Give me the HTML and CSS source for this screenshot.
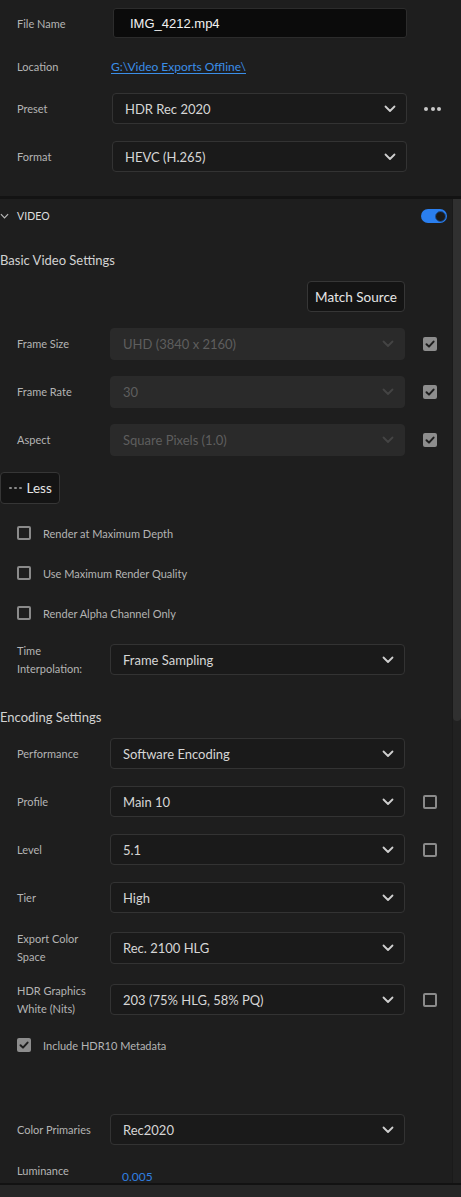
FILE: index.html
```html
<!DOCTYPE html>
<html>
<head>
<meta charset="utf-8">
<link rel="stylesheet" href="styles.css">
</head>
<body>
<div class="top">
  <div class="trow trow-name">
    <span class="tlabel">File Name</span>
    <div class="name-input">IMG_4212.mp4</div>
  </div>
  <div class="trow trow-loc">
    <span class="tlabel">Location</span>
    <a class="link" href="#">G:\Video Exports Offline\</a>
  </div>
  <div class="trow trow-preset">
    <span class="tlabel">Preset</span>
    <div class="select tselect"><span>HDR Rec 2020</span><svg class="chev" viewBox="0 0 12 8"><path d="M1.5 1.5 L6 6 L10.5 1.5"/></svg></div>
    <div class="more"><i></i><i></i><i></i></div>
  </div>
  <div class="trow trow-format">
    <span class="tlabel">Format</span>
    <div class="select tselect"><span>HEVC (H.265)</span><svg class="chev" viewBox="0 0 12 8"><path d="M1.5 1.5 L6 6 L10.5 1.5"/></svg></div>
  </div>
</div>
<div class="sep"></div>
<div class="scroll">
  <div class="content">
    <div class="video-head">
      <svg class="head-chev" viewBox="0 0 10 6"><path d="M1 1 L5 5 L9 1"/></svg>
      <span class="video-title">VIDEO</span>
      <div class="toggle"><span class="knob"></span></div>
    </div>
    <div class="heading h-basic">Basic Video Settings</div>
    <div class="match-row"><button class="btn match">Match Source</button></div>

    <div class="row r-first">
      <span class="label">Frame Size</span>
      <div class="select disabled"><span>UHD (3840 x 2160)</span><svg class="chev" viewBox="0 0 12 8"><path d="M1.5 1.5 L6 6 L10.5 1.5"/></svg></div>
      <span class="cb checked"><svg viewBox="0 0 14 14"><path d="M3.5 7.2 L6 9.6 L10.6 4.6"/></svg></span>
    </div>
    <div class="row r-dis">
      <span class="label">Frame Rate</span>
      <div class="select disabled"><span>30</span><svg class="chev" viewBox="0 0 12 8"><path d="M1.5 1.5 L6 6 L10.5 1.5"/></svg></div>
      <span class="cb checked"><svg viewBox="0 0 14 14"><path d="M3.5 7.2 L6 9.6 L10.6 4.6"/></svg></span>
    </div>
    <div class="row r-dis">
      <span class="label">Aspect</span>
      <div class="select disabled"><span>Square Pixels (1.0)</span><svg class="chev" viewBox="0 0 12 8"><path d="M1.5 1.5 L6 6 L10.5 1.5"/></svg></div>
      <span class="cb checked"><svg viewBox="0 0 14 14"><path d="M3.5 7.2 L6 9.6 L10.6 4.6"/></svg></span>
    </div>

    <button class="btn less"><span class="sdots"><i></i><i></i><i></i></span>Less</button>

    <div class="crow c-first"><span class="cb"></span><span class="ctext">Render at Maximum Depth</span></div>
    <div class="crow"><span class="cb"></span><span class="ctext">Use Maximum Render Quality</span></div>
    <div class="crow"><span class="cb"></span><span class="ctext">Render Alpha Channel Only</span></div>

    <div class="row r-time">
      <span class="label two">Time<br>Interpolation:</span>
      <div class="select"><span>Frame Sampling</span><svg class="chev" viewBox="0 0 12 8"><path d="M1.5 1.5 L6 6 L10.5 1.5"/></svg></div>
    </div>

    <div class="heading h-enc">Encoding Settings</div>

    <div class="row r-perf">
      <span class="label">Performance</span>
      <div class="select"><span>Software Encoding</span><svg class="chev" viewBox="0 0 12 8"><path d="M1.5 1.5 L6 6 L10.5 1.5"/></svg></div>
    </div>
    <div class="row">
      <span class="label">Profile</span>
      <div class="select"><span>Main 10</span><svg class="chev" viewBox="0 0 12 8"><path d="M1.5 1.5 L6 6 L10.5 1.5"/></svg></div>
      <span class="cb"></span>
    </div>
    <div class="row">
      <span class="label">Level</span>
      <div class="select"><span>5.1</span><svg class="chev" viewBox="0 0 12 8"><path d="M1.5 1.5 L6 6 L10.5 1.5"/></svg></div>
      <span class="cb"></span>
    </div>
    <div class="row">
      <span class="label">Tier</span>
      <div class="select"><span>High</span><svg class="chev" viewBox="0 0 12 8"><path d="M1.5 1.5 L6 6 L10.5 1.5"/></svg></div>
    </div>
    <div class="row r-export">
      <span class="label two">Export Color<br>Space</span>
      <div class="select"><span>Rec. 2100 HLG</span><svg class="chev" viewBox="0 0 12 8"><path d="M1.5 1.5 L6 6 L10.5 1.5"/></svg></div>
    </div>
    <div class="row r-hdr">
      <span class="label two">HDR Graphics<br>White (Nits)</span>
      <div class="select"><span>203 (75% HLG, 58% PQ)</span><svg class="chev" viewBox="0 0 12 8"><path d="M1.5 1.5 L6 6 L10.5 1.5"/></svg></div>
      <span class="cb"></span>
    </div>

    <div class="crow c-hdr10"><span class="cb checked"><svg viewBox="0 0 14 14"><path d="M3.5 7.2 L6 9.6 L10.6 4.6"/></svg></span><span class="ctext">Include HDR10 Metadata</span></div>

    <div class="row r-prim">
      <span class="label">Color Primaries</span>
      <div class="select"><span>Rec2020</span><svg class="chev" viewBox="0 0 12 8"><path d="M1.5 1.5 L6 6 L10.5 1.5"/></svg></div>
    </div>
    <div class="lum-row">
      <span class="label lum-label">Luminance</span>
      <span class="lum-val">0.005</span>
    </div>
  </div>
  <div class="scrollbar"><div class="thumb"></div></div>
</div>
<div class="bottom"></div>
</body>
</html>
```
FILE: styles.css
```css
* { box-sizing: border-box; }
html, body { margin: 0; padding: 0; }
body {
  width: 461px;
  height: 1197px;
  overflow: hidden;
  background: #1e1e1e;
  font-family: Lato, "Open Sans", sans-serif;
  color: #c8c8c8;
}

/* top section */
.top { padding: 8px 0 24px 0; height: 196px; }
.trow { display: flex; align-items: center; padding-left: 17px; }
.tlabel { width: 95px; font-size: 11px; color: #b4b4b4; flex: none; }
.trow-name { height: 30px; }
.trow-loc { height: 30px; margin-top: 13px; }
.trow-preset { height: 31px; margin-top: 12px; }
.trow-format { height: 31px; margin-top: 17px; }
.trow-name .tlabel { width: 96px; }
.name-input {
  width: 294px; height: 30px;
  background: #0b0b0b;
  border: 1px solid #2c2c2c;
  border-radius: 3px;
  padding-left: 16px;
  font-family: "Liberation Sans", Arial, sans-serif;
  font-size: 13px;
  color: #f2f2f2;
  display: flex; align-items: center;
}
.trow-loc .tlabel { width: 94px; }
.link {
  color: #3b8ee8;
  font-size: 12px;
  text-decoration: underline;
  text-underline-offset: 2px;
}
.tselect { width: 295px; }
.more { display: flex; gap: 2.5px; margin-left: 17px; }
.more i { width: 4px; height: 4px; border-radius: 50%; background: #c8c8c8; display: block; }

.sep { height: 3px; background: #131313; }

/* scroll area */
.scroll { display: flex; height: 984px; overflow: hidden; }
.content { width: 452px; flex: none; }
.scrollbar { width: 9px; background: #212121; border-left: 1px solid #1a1a1a; }
.thumb { height: 522px; background: #303030; border-radius: 0 0 4px 4px; }

.video-head { display: flex; align-items: center; height: 20px; margin-top: 7px; }
.head-chev { width: 9px; height: 6px; margin-left: 0; fill: none; stroke: #b8b8b8; stroke-width: 1.3; }
.video-title { font-size: 10.5px; color: #dedede; margin-left: 8px; letter-spacing: 0.1px; }
.toggle {
  margin-left: auto; margin-right: 5px;
  width: 26px; height: 14px; border-radius: 7px;
  background: #2a7ff0;
  position: relative;
}
.knob {
  position: absolute; right: 1.5px; top: 1.5px;
  width: 11px; height: 11px; border-radius: 50%;
  background: #1a1a1a;
  border: 1.5px solid #1c4f95;
}

.heading { font-size: 13px; color: #d2d2d2; height: 20px; line-height: 20px; }
.h-basic { margin-top: 24px; }
.h-enc { margin-top: 32px; }

.match-row { display: flex; justify-content: flex-end; padding-right: 47px; margin-top: 11px; }
.btn {
  font-family: Lato, "Open Sans", sans-serif;
  background: #141414;
  border: 1px solid #363636;
  border-radius: 4px;
  color: #e6e6e6;
  font-size: 13.5px;
  padding: 0;
}
.match { width: 98px; height: 31px; }

.row { display: flex; align-items: center; height: 31px; margin-top: 17px; padding-left: 17px; }
.label { width: 93px; flex: none; font-size: 11px; color: #b4b4b4; line-height: 18px; }
.select {
  width: 295px; height: 100%;
  display: flex; align-items: center; justify-content: space-between;
  padding: 0 10px 0 12px;
  background: #1a1a1a;
  border: 1px solid #333;
  border-radius: 4px;
  font-size: 13px;
  color: #d6d6d6;
  flex: none;
}
.chev { width: 12px; height: 8px; fill: none; stroke: #cfcfcf; stroke-width: 1.8; stroke-linecap: round; stroke-linejoin: round; }
.select.disabled { background: #2a2a2a; border-color: #2a2a2a; color: #5e5e5e; }
.select.disabled .chev { stroke: #444; }

.r-first { height: 32px; margin-top: 16px; }
.r-dis { height: 32px; margin-top: 16px; }

.cb {
  width: 14px; height: 14px; flex: none;
  border: 2px solid #8a8a8a;
  border-radius: 2px;
  margin-left: 18px;
  display: flex; align-items: center; justify-content: center;
}
.cb.checked { background: #8d8d8d; border: none; }
.cb svg { width: 14px; height: 14px; fill: none; stroke: #1e1e1e; stroke-width: 2; stroke-linecap: round; stroke-linejoin: round; }

.less {
  display: flex; align-items: center;
  width: 60px; height: 32px; margin-top: 16px;
  padding-left: 8px;
}
.sdots { display: flex; gap: 2.5px; margin-right: 5px; }
.sdots i { width: 2.5px; height: 2.5px; border-radius: 50%; background: #8a8a8a; display: block; }

.crow { display: flex; align-items: center; height: 14px; margin-top: 26px; padding-left: 17px; }
.crow .cb { margin-left: 0; }
.c-first { margin-top: 22px; }
.ctext { font-size: 11px; color: #b4b4b4; margin-left: 12px; }

.r-time { margin-top: 24px; }
.r-perf { margin-top: 11px; }
.r-export { height: 32px; margin-top: 19px; }
.r-hdr { margin-top: 20px; }
.c-hdr10 { margin-top: 23px; }
.r-prim { margin-top: 62px; }

.lum-row { display: flex; padding-left: 17px; margin-top: 17px; height: 30px; }
.lum-label { width: 105px; }
.lum-val { color: #2f7fe0; font-size: 12px; margin-top: 7px; }

.bottom { height: 14px; background: #262626; border-top: 2px solid #121212; }
```
